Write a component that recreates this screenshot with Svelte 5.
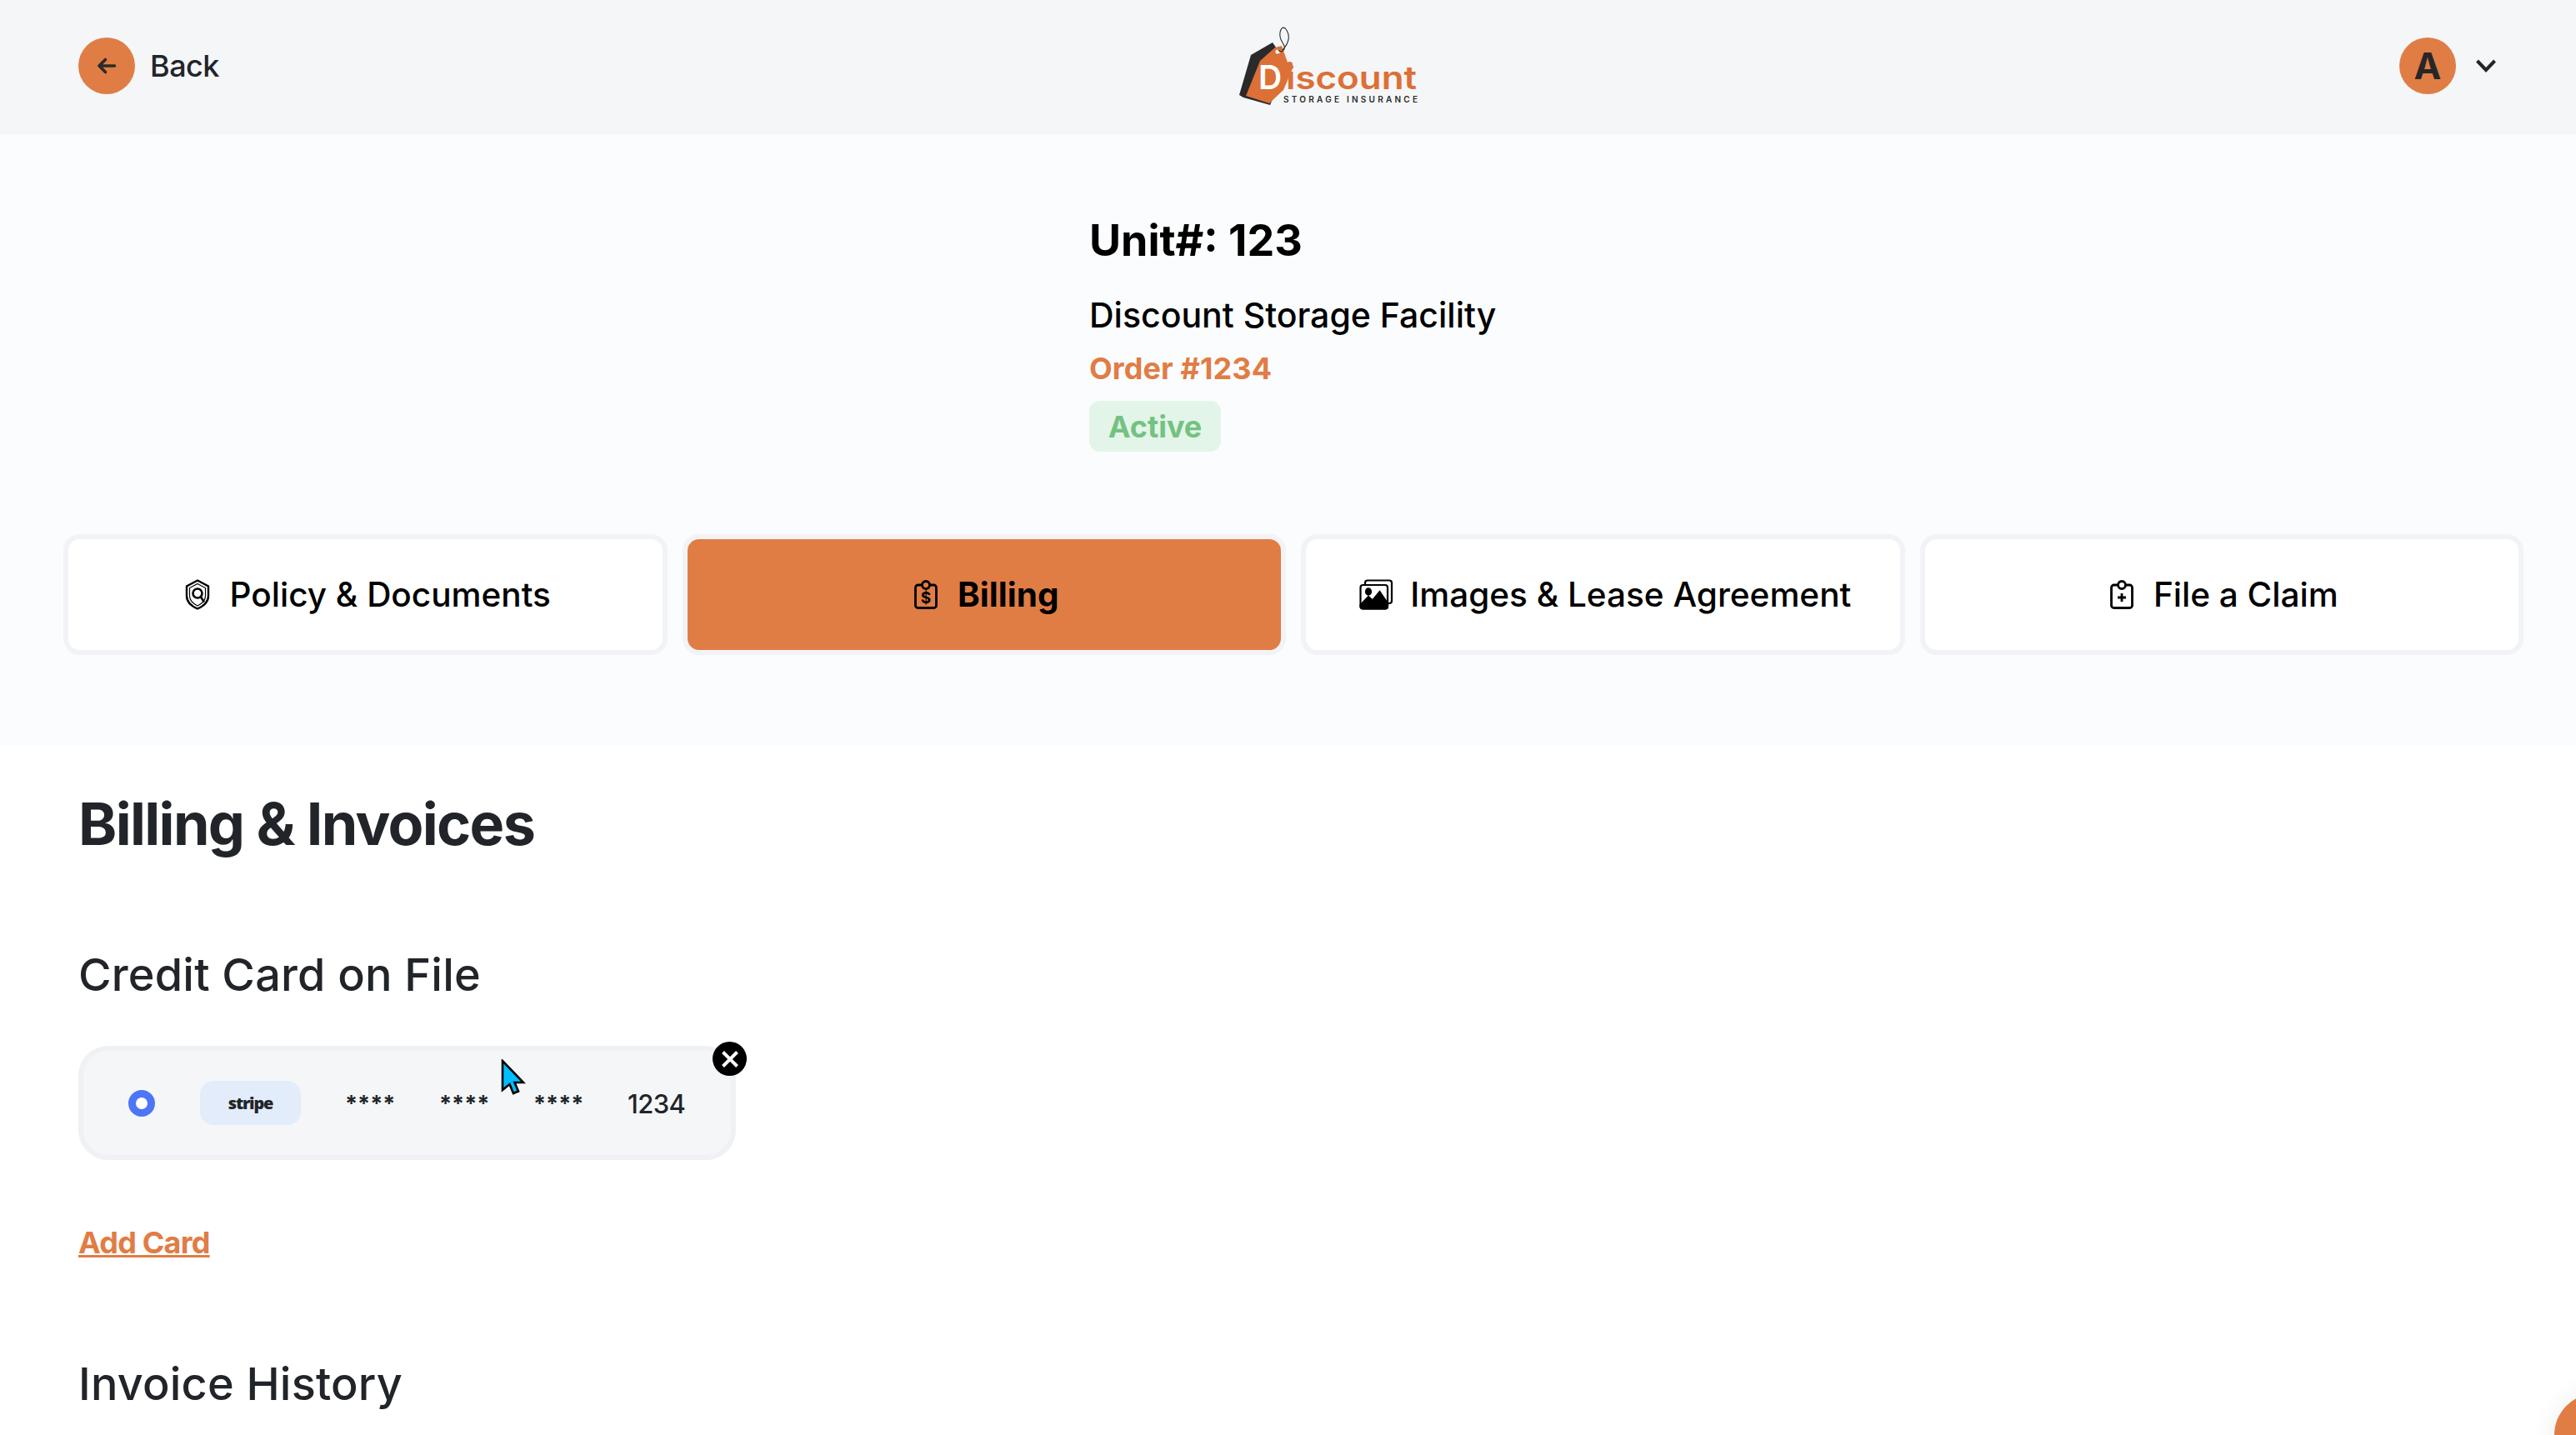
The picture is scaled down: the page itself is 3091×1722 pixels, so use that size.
<script>
	const tabs = [
		{ label: "Policy & Documents", icon: "shield", active: false },
		{ label: "Billing", icon: "bill", active: true },
		{ label: "Images & Lease Agreement", icon: "images", active: false },
		{ label: "File a Claim", icon: "claim", active: false }
	];
	const cardGroups = ["****", "****", "****"];
</script>

<div class="page">
	<header class="topbar">
		<div class="left">
			<button class="back">
				<span class="back_circle">
					<svg width="24" height="22" viewBox="0 0 24 22" fill="none" stroke="#2b2b2b" stroke-width="3.6" stroke-linecap="round" stroke-linejoin="round">
						<path d="M21.5 11H3M10.5 3.5 3 11l7.5 7.5" />
					</svg>
				</span>
				<span class="back_text">Back</span>
			</button>
		</div>
		<svg class="logo" width="300" height="130" viewBox="0 0 300 130">
			<path d="M87 41 61 56 47 104l5 3 32 9 20-50Z" fill="#2a2a2a" />
			<path d="M90 47 98 45 105 65 112 70 100 98 83 114 55 105 72 63Z" fill="#dc7036" />
			<circle cx="93" cy="52" r="2.6" fill="#f5f6f8" />
			<path d="M99 50C108 40 108 32 103 25 99 20 95 26 96 34 97 41 103 44 101 49 99 53 95 52 94 50" fill="none" stroke="#2a2a2a" stroke-width="1.1" />
			<text x="70" y="97" class="logo_d">D</text>
			<circle cx="107.500" cy="67.500" r="3.600" fill="#dc7036" />
			<text x="103" y="97" class="logo_word" textLength="157" lengthAdjust="spacingAndGlyphs">iscount</text>
			<text x="100" y="113" class="logo_sub" textLength="161">STORAGE INSURANCE</text>
		</svg>
		<div class="account">
			<span class="avatar">A</span>
			<svg width="24" height="16" viewBox="0 0 24 16" fill="none" stroke="#212529" stroke-width="4" stroke-linejoin="miter">
				<path d="M1.500 2 12 13 22.500 2" />
			</svg>
		</div>
	</header>

	<section class="hero">
		<div class="unit_info">
			<h2 class="unit">Unit#: 123</h2>
			<div class="facility">Discount Storage Facility</div>
			<div class="order">Order #1234</div>
			<div class="status">Active</div>
		</div>

		<nav class="tabs">
			{#each tabs as tab}
				<button class="tab" class:active={tab.active}>
					{#if tab.icon === "shield"}
						<svg width="30" height="37" viewBox="0 0 30 37" fill="none" stroke="#000">
							<path d="M15 1.500 28 8.500V20C28 27 22 32.500 15 35.500 8 32.500 2 27 2 20V8.500Z" stroke-width="2.400" />
							<path d="M15 5.500 24.500 10.500V20C24.500 25 20 29.500 15 32 10 29.500 5.500 25 5.500 20V10.500Z" stroke-width="1.200" />
							<circle cx="15" cy="17" r="5.500" stroke-width="2.600" />
							<path d="m19 21.500 4 6" stroke-width="2.600" />
						</svg>
					{:else if tab.icon === "bill"}
						<svg width="28" height="35" viewBox="0 0 28 35" fill="none" stroke="#000" stroke-width="2.800">
							<rect x="1.500" y="6" width="25" height="27.500" rx="3" />
							<circle cx="14" cy="6" r="4.500" fill="#e07d45" />
							<text x="14" y="27.500" class="dollar" text-anchor="middle">$</text>
						</svg>
					{:else if tab.icon === "images"}
						<svg class="images_icon" width="41" height="37" viewBox="0 0 41 37" fill="none" stroke="#000" stroke-width="2.200">
							<path d="M7 6V4.500A3 3 0 0 1 10 1.500H36A3 3 0 0 1 39 4.500V26A3 3 0 0 1 36 29H34" />
							<rect x="1.500" y="7" width="32.500" height="28.500" rx="3" />
							<path d="M1.500 31 11 21l5 4.500L24.500 15 34 29v3.500a3 3 0 0 1-3 3H4.500a3 3 0 0 1-3-3Z" fill="#000" />
							<ellipse cx="11" cy="15" rx="3" ry="3.600" fill="#000" />
						</svg>
					{:else}
						<svg width="28" height="35" viewBox="0 0 28 35" fill="none" stroke="#000" stroke-width="2.800">
							<rect x="1.500" y="6" width="25" height="27.500" rx="3" />
							<circle cx="14" cy="6" r="4.500" fill="#fff" />
							<path d="M14 16v10M9 21h10" />
						</svg>
					{/if}
					<span>{tab.label}</span>
				</button>
			{/each}
		</nav>
	</section>

	<main class="content">
		<h1>Billing &amp; Invoices</h1>
		<h3 class="credit">Credit Card on File</h3>

		<div class="card">
			<span class="radio"></span>
			<span class="stripe">stripe</span>
			{#each cardGroups as group}
				<span class="stars">{group}</span>
			{/each}
			<span class="last4">1234</span>
			<span class="remove">
				<svg width="22" height="22" viewBox="0 0 22 22" stroke="#fff" stroke-width="4">
					<path d="M2.500 2.500 19.500 19.500M19.500 2.500 2.500 19.500" />
				</svg>
			</span>
		</div>

		<a class="add_card" href="#add">Add Card</a>
		<h3 class="invoice">Invoice History</h3>
	</main>

	<svg class="cursor" width="30" height="44" viewBox="0 0 30 44">
		<path d="M2 2V37L10.500 30 15 41 21 38.500 16.500 28H27Z" fill="#00bdff" stroke="#000" stroke-width="2.600" />
	</svg>
	<div class="fab"></div>
</div>

<style>
	:global(body) {
		margin: 0;
		background: #fff;
	}

	* {
		box-sizing: border-box;
	}

	.page {
		position: relative;
		width: 3091px;
		height: 1722px;
		overflow: hidden;
		font-family: Inter, "Noto Sans", sans-serif;
		color: #212529;
	}

	.topbar {
		height: 161px;
		background: #f5f6f8;
		display: flex;
		align-items: flex-start;
		padding: 45px 96px 0 94px;
	}

	.left {
		flex: 0 0 1346px;
	}

	.back {
		display: flex;
		align-items: center;
		gap: 18px;
		padding: 0;
		border: 0;
		background: none;
		font: inherit;
		color: inherit;
	}

	.back_circle {
		width: 68px;
		height: 68px;
		border-radius: 50%;
		background: #e07d45;
		display: flex;
		align-items: center;
		justify-content: center;
	}

	.back_text {
		font-size: 36px;
		font-weight: 500;
		letter-spacing: -0.5px;
	}

	.logo {
		margin-top: -35px;
	}

	.logo_d {
		font: 600 39px Inter, sans-serif;
		fill: #fff;
	}

	.logo_word {
		font: 600 38px Inter, sans-serif;
		fill: #dc7036;
	}

	.logo_sub {
		font: 600 10px Inter, sans-serif;
		fill: #2a2a2a;
	}

	.account {
		margin-left: auto;
		display: flex;
		align-items: center;
		gap: 24px;
	}

	.avatar {
		width: 68px;
		height: 68px;
		border-radius: 50%;
		background: #e07d45;
		display: flex;
		align-items: center;
		justify-content: center;
		font-size: 44px;
		font-weight: 700;
		color: #272727;
	}

	.hero {
		background: #fbfcfe;
		padding: 98px 63px 108px 76px;
	}

	.unit_info {
		margin-left: 1231px;
		color: #000;
	}

	.unit {
		margin: 0;
		font-size: 52px;
		line-height: 60px;
		font-weight: 700;
	}

	.facility {
		margin-top: 35px;
		font-size: 41px;
		line-height: 48px;
		font-weight: 500;
	}

	.order {
		margin-top: 18px;
		font-size: 36px;
		line-height: 44px;
		font-weight: 700;
		letter-spacing: 0.1px;
		color: #e07d45;
	}

	.status {
		margin-top: 17px;
		width: 158px;
		height: 61px;
		border-radius: 13px;
		background: #e3f5e8;
		color: #74c281;
		font-size: 36px;
		font-weight: 700;
		display: flex;
		align-items: center;
		justify-content: center;
	}

	.tabs {
		margin-top: 99px;
		display: grid;
		grid-template-columns: repeat(4, 1fr);
		gap: 18px;
	}

	.tab {
		height: 145px;
		border: 6px solid #f2f3f6;
		border-radius: 20px;
		background: #fff;
		display: flex;
		align-items: center;
		justify-content: center;
		gap: 24px;
		padding: 0 0 0 6px;
		font-family: inherit;
		font-size: 40.500px;
		font-weight: 500;
		color: #000;
	}

	.tab.active {
		background: #e07d45;
		font-weight: 700;
	}

	.images_icon {
		margin-right: -4px;
	}

	.dollar {
		font: 700 19px Inter, sans-serif;
		fill: #000;
		stroke: none;
	}

	.content {
		padding: 53px 94px 0;
	}

	h1 {
		margin: 0;
		font-size: 70px;
		line-height: 84px;
		font-weight: 700;
		letter-spacing: -1.650px;
	}

	h3 {
		margin: 0;
		font-size: 54px;
		line-height: 62px;
		font-weight: 500;
		letter-spacing: 0.2px;
	}

	.credit {
		margin-top: 108px;
	}

	.card {
		position: relative;
		margin-top: 54px;
		width: 789px;
		height: 137px;
		border: 6px solid #f0f1f5;
		border-radius: 36px;
		background: #f5f6f8;
		display: flex;
		align-items: center;
		padding-left: 54px;
	}

	.radio {
		width: 32px;
		height: 32px;
		border-radius: 50%;
		border: 9px solid #4d76f7;
		background: #fff;
	}

	.stripe {
		margin-left: 54px;
		margin-right: 53px;
		width: 121px;
		height: 53px;
		border-radius: 16px;
		background: #e3ecfb;
		display: flex;
		align-items: center;
		justify-content: center;
		font-family: "Open Sans", sans-serif;
		font-size: 20px;
		font-weight: 800;
		letter-spacing: -1.200px;
	}

	.stars {
		width: 56px;
		margin-right: 57px;
		font-size: 27px;
		line-height: 30px;
		font-weight: 700;
		transform: translateY(1px);
	}

	.last4 {
		font-size: 31px;
		font-weight: 500;
		letter-spacing: -0.6px;
		transform: translateY(1px);
	}

	.remove {
		position: absolute;
		top: -11px;
		right: -19px;
		width: 41px;
		height: 41px;
		border-radius: 50%;
		background: #000;
		display: flex;
		align-items: center;
		justify-content: center;
	}

	.add_card {
		display: block;
		width: max-content;
		margin-top: 77px;
		font-size: 36px;
		line-height: 44px;
		font-weight: 700;
		letter-spacing: -0.800px;
		color: #e07d45;
		text-decoration: underline;
	}

	.invoice {
		margin-top: 117px;
	}

	.cursor {
		position: absolute;
		left: 601px;
		top: 1271px;
	}

	.fab {
		position: absolute;
		left: 3065px;
		top: 1672px;
		width: 100px;
		height: 100px;
		border-radius: 50%;
		background: #e07d45;
		box-shadow: 0 0 30px rgba(0, 0, 0, 0.08);
	}
</style>
